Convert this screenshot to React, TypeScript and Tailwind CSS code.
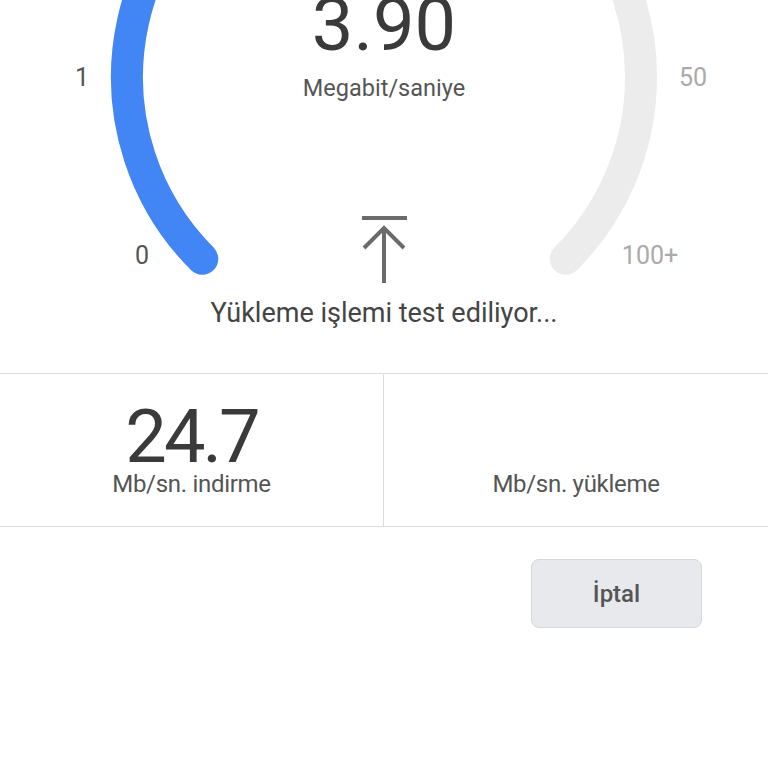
import React from 'react';

function Gauge() {
  return (
    <svg className="absolute left-0 top-0" width="768" height="373" viewBox="0 0 768 373" fill="none">
      <path
        d="M 202.27 258.73 A 257 257 0 1 1 565.73 258.73"
        stroke="#ececec"
        strokeWidth="32"
        strokeLinecap="round"
      />
      <path
        d="M 202.27 258.73 A 257 257 0 0 1 296.1 -164.5"
        stroke="#4285f4"
        strokeWidth="32"
        strokeLinecap="round"
      />
    </svg>
  );
}

function UploadArrow() {
  return (
    <svg width="48" height="70" viewBox="0 0 48 70" fill="none" stroke="#6b6b6b" strokeWidth="4">
      <line x1="2" y1="3" x2="47" y2="3" />
      <line x1="24" y1="13" x2="24" y2="68" />
      <polyline points="4,33 24,13 44,33" />
    </svg>
  );
}

export default function App() {
  return (
    <div className="w-full h-[768px] bg-white overflow-hidden font-['Roboto','Liberation_Sans',sans-serif]">
      <div className="relative h-[373px] flex flex-col items-center">
        <Gauge />
        <span className="absolute left-[82px] top-[77px] -translate-x-1/2 -translate-y-1/2 text-[25px] leading-none text-[#555]">1</span>
        <span className="absolute left-[142px] top-[255px] -translate-x-1/2 -translate-y-1/2 text-[25px] leading-none text-[#555]">0</span>
        <span className="absolute left-[693px] top-[77px] -translate-x-1/2 -translate-y-1/2 text-[25px] leading-none text-[#aaa]">50</span>
        <span className="absolute left-[650px] top-[255px] -translate-x-1/2 -translate-y-1/2 text-[25px] leading-none text-[#aaa]">100+</span>

        <div className="relative mt-[-12px] text-[74px] leading-none text-[#3a3a3a]">3.90</div>
        <div className="relative mt-[15px] text-[23.5px] leading-none text-[#555]">Megabit/saniye</div>
        <div className="relative mt-[114px]">
          <UploadArrow />
        </div>
        <div className="relative mt-[15px] text-[27px] leading-none text-[#444]">Yükleme işlemi test ediliyor...</div>
      </div>

      <div className="grid grid-cols-2 h-[154px] border-y border-[#dcdcdc]">
        <div className="flex flex-col items-center border-r border-[#dcdcdc]">
          <div className="mt-[30px] text-[74px] leading-[0.9] tracking-[-3px] text-[#3a3a3a]">24.7</div>
          <div className="mt-[1px] text-[24px] leading-none tracking-[-0.3px] text-[#555]">Mb/sn. indirme</div>
        </div>
        <div className="flex flex-col items-center">
          <div className="mt-[98px] text-[24px] leading-none tracking-[-0.3px] text-[#555]">Mb/sn. yükleme</div>
        </div>
      </div>

      <div className="flex justify-end pr-[66px] pt-[32px]">
        <button className="w-[171px] h-[69px] rounded-lg bg-[#e8e9ec] border border-[#d6d7db] text-[24px] font-medium text-[#555]">
          İptal
        </button>
      </div>
    </div>
  );
}
